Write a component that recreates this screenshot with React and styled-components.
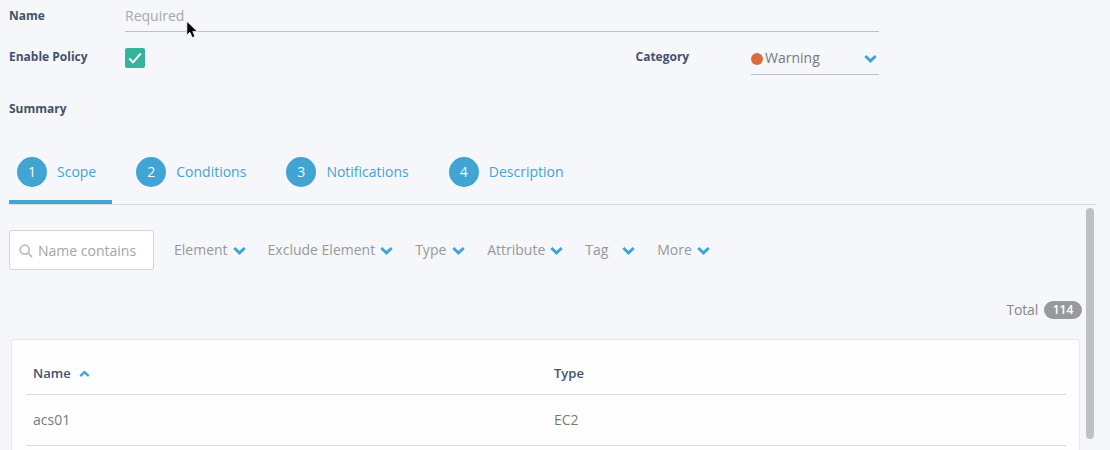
import React from 'react';
import styled, { createGlobalStyle } from 'styled-components';

const GlobalStyle = createGlobalStyle`
  * { box-sizing: border-box; }
  html, body { margin: 0; background: #f5f7fa; }
  body { font-family: "Open Sans", "Noto Sans", sans-serif; font-size: 14px; overflow: hidden; }
`;

const Page = styled.main`
  position: relative;
  display: flex;
  flex-direction: column;
  width: 1110px;
  height: 450px;
  padding-left: 9px;
  overflow: hidden;
  background: #f5f7fa;
  > * { flex-shrink: 0; }
`;

const FormRow = styled.div`
  display: flex;
  align-items: flex-start;
  width: 870px;
  height: ${(p) => p.$height}px;
`;

const Label = styled.label`
  width: ${(p) => p.$width || 116}px;
  flex: none;
  padding-top: ${(p) => p.$top}px;
  line-height: 18px;
  font-size: 12px;
  font-weight: 700;
  color: #42526e;
`;

const NameInput = styled.input`
  flex: 1;
  min-width: 0;
  height: 32px;
  padding: 0;
  border: 0;
  border-bottom: 1px solid #bfc2c9;
  border-radius: 0;
  background: transparent;
  font: inherit;
  color: #6f7175;
  outline: none;
  &::placeholder { color: #a6a8ab; opacity: 1; }
`;

const Checkbox = styled.span`
  display: flex;
  align-items: center;
  justify-content: center;
  width: 20px;
  height: 20px;
  margin-top: 16px;
  border-radius: 2px;
  background: #37b29b;
`;

const CategoryField = styled.div`
  display: flex;
  margin-left: auto;
`;

const Select = styled.div`
  display: flex;
  align-items: center;
  width: 128px;
  height: 32px;
  margin-top: 11px;
  padding: 0 2px 0 0;
  border-bottom: 1px solid #bfc2c9;
  color: #77797d;
  svg { margin-left: auto; }
`;

const SelectValue = styled.span`
  padding-bottom: 2px;
`;

const Dot = styled.i`
  width: 12px;
  height: 12px;
  margin-right: 2px;
  border-radius: 50%;
  background: #dc6c3f;
`;

const Tabs = styled.nav`
  display: flex;
  gap: 16px;
  width: 1088px;
  height: 61px;
  border-bottom: 1px solid #d9dbde;
`;

const Tab = styled.div`
  display: flex;
  align-items: flex-start;
  gap: 10px;
  height: 60px;
  padding: 13px 16px 0 8px;
  line-height: 30px;
  color: #41a4d3;
  border-bottom: 4px solid ${(p) => (p.$active ? '#41a4d3' : 'transparent')};
`;

const Step = styled.span`
  width: 30px;
  height: 30px;
  border-radius: 50%;
  background: #41a4d3;
  color: #f4fafd;
  text-align: center;
`;

const Filters = styled.div`
  display: flex;
  align-items: center;
  gap: 22px;
  height: 40px;
  margin-top: 25px;
`;

const Search = styled.div`
  display: flex;
  align-items: center;
  gap: 5px;
  width: 145px;
  height: 40px;
  margin-right: -2px;
  padding: 1px 0 0 9px;
  border: 1px solid #d3d4d7;
  border-radius: 3px;
  background: #fff;
  color: #a3a5a8;
`;

const Filter = styled.div`
  display: flex;
  align-items: center;
  justify-content: space-between;
  gap: 5px;
  min-width: 50px;
  line-height: 20px;
  color: #97999c;
`;

const Total = styled.div`
  display: flex;
  align-items: center;
  justify-content: flex-end;
  gap: 6px;
  width: 1073px;
  height: 18px;
  margin-top: 31px;
  color: #85878a;
`;

const TotalLabel = styled.span`
  padding-bottom: 2px;
  letter-spacing: -0.2px;
`;

const Badge = styled.span`
  width: 38px;
  height: 18px;
  border-radius: 9px;
  background: #97999b;
  color: #fff;
  font-size: 12px;
  font-weight: 600;
  line-height: 18px;
  text-align: center;
`;

const Card = styled.section`
  width: 1069px;
  height: 130px;
  margin: 20px 0 0 2px;
  padding: 15px 13px 0 14px;
  border: 1px solid #e6e8ec;
  border-radius: 3px;
  background: #fefefe;
`;

const TableRow = styled.div`
  display: grid;
  grid-template-columns: 521px 1fr;
  align-items: center;
  height: ${(p) => (p.$head ? 40 : 51)}px;
  padding: 0 0 ${(p) => (p.$head ? 4 : 1)}px 7px;
  border-bottom: 1px solid #dcdddf;
  color: ${(p) => (p.$head ? '#42526e' : '#77797d')};
  font-size: ${(p) => (p.$head ? 13 : 14)}px;
  font-weight: ${(p) => (p.$head ? 600 : 400)};
`;

const HeadCell = styled.span`
  display: flex;
  align-items: center;
  gap: 8px;
  svg { margin-top: 2px; }
`;

const Scrollbar = styled.div`
  position: absolute;
  left: 1086px;
  top: 208px;
  width: 8px;
  height: 231px;
  border-radius: 4px;
  background: #bfc0c1;
`;

const Pointer = styled.svg`
  position: absolute;
  left: 185px;
  top: 20px;
`;

const Chevron = ({ up }) => (
  <svg width={up ? 11 : 13} height={up ? 8 : 9} viewBox="0 0 13 9" fill="none">
    <path d={up ? 'M1.5 7 6.5 2.3 11.5 7' : 'M1.3 2 6.5 6.9 11.7 2'} stroke="#41a4d3" strokeWidth="2.9" />
  </svg>
);

const steps = ['Scope', 'Conditions', 'Notifications', 'Description'];
const filters = ['Element', 'Exclude Element', 'Type', 'Attribute', 'Tag', 'More'];

export default function App() {
  return (
    <Page>
      <GlobalStyle />
      <FormRow $height={32}>
        <Label $top={7}>Name</Label>
        <NameInput placeholder="Required" />
      </FormRow>
      <FormRow $height={58}>
        <Label $top={16}>Enable Policy</Label>
        <Checkbox>
          <svg width="14" height="12" viewBox="0 0 14 12" fill="none">
            <path d="M1.2 6.5 5 10.3 12.8 1.5" stroke="#fff" strokeWidth="1.9" />
          </svg>
        </Checkbox>
        <CategoryField>
          <Label $top={16} $width={115.5}>Category</Label>
          <Select><Dot /><SelectValue>Warning</SelectValue><Chevron /></Select>
        </CategoryField>
      </FormRow>
      <FormRow $height={54}>
        <Label $top={10}>Summary</Label>
      </FormRow>
      <Tabs>
        {steps.map((name, i) => (
          <Tab key={name} $active={i === 0}><Step>{i + 1}</Step>{name}</Tab>
        ))}
      </Tabs>
      <Filters>
        <Search>
          <svg width="14" height="14" viewBox="0 0 14 14" fill="none" stroke="#bdbec0" strokeWidth="1.8">
            <circle cx="5.7" cy="5.7" r="4.5" />
            <path d="M9 9 13 13" />
          </svg>
          Name contains
        </Search>
        {filters.map((name) => (
          <Filter key={name}>{name}<Chevron /></Filter>
        ))}
      </Filters>
      <Total><TotalLabel>Total</TotalLabel><Badge>114</Badge></Total>
      <Card>
        <TableRow $head>
          <HeadCell>Name<Chevron up /></HeadCell>
          <HeadCell>Type</HeadCell>
        </TableRow>
        <TableRow><span>acs01</span><span>EC2</span></TableRow>
      </Card>
      <Scrollbar />
      <Pointer width="14" height="20" viewBox="0 0 14 20">
        <path d="M1.8 1.2V15.2l3.1-2.9 2.3 5.3 2.8-1.2-2.2-5h4.5Z" fill="#050505" stroke="#fff" strokeWidth="0.8" />
      </Pointer>
    </Page>
  );
}
